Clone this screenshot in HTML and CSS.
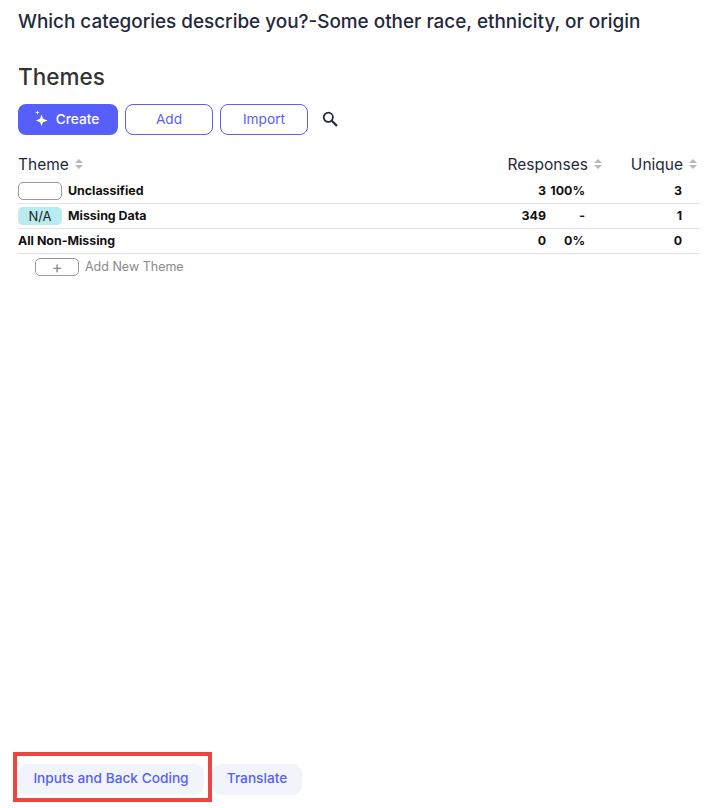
FILE: index.html
```html
<!DOCTYPE html>
<html lang="en">
<head>
    <meta charset="UTF-8">
    <title>Themes</title>
    <link rel="stylesheet" href="styles.css">
</head>
<body>
    <div class="container">
        <h2 class="question">Which categories describe you?-Some other race, ethnicity, or origin</h2>
        <h3 class="section-title">Themes</h3>
        <div class="button-group">
            <button class="btn btn-primary">
                <svg class="sparkle" width="15" height="16" viewBox="0 0 15 16" fill="#fff">
                    <path d="M6.5 4.5 L8 8.8 L12.6 10.5 L8 12.2 L6.5 16 L5 12.2 L0.9 10.5 L5 8.8 Z"/>
                    <path d="M2.4 0.2 L3.1 1.9 L4.7 2.5 L3.1 3.1 L2.4 4.8 L1.7 3.1 L0.1 2.5 L1.7 1.9 Z"/>
                </svg>
                Create
            </button>
            <button class="btn btn-outline">Add</button>
            <button class="btn btn-outline">Import</button>
            <svg class="search-icon" width="16" height="16" viewBox="0 0 16 16" fill="none" stroke="#1f2a3c" stroke-width="1.8">
                <circle cx="6.3" cy="6.3" r="4.6"/>
                <path d="M9.8 9.8 L15 15" stroke-width="2.2"/>
            </svg>
        </div>

        <div class="theme-table">
            <div class="row row-head">
                <div class="head-cell">Theme
                    <svg class="sort" width="8" height="10" viewBox="0 0 8 10"><path d="M4 0 L8 4 H0 Z M0 6 H8 L4 10 Z"/></svg>
                </div>
                <div class="head-cell head-responses">Responses
                    <svg class="sort" width="8" height="10" viewBox="0 0 8 10"><path d="M4 0 L8 4 H0 Z M0 6 H8 L4 10 Z"/></svg>
                </div>
                <div class="head-cell head-unique">Unique
                    <svg class="sort" width="8" height="10" viewBox="0 0 8 10"><path d="M4 0 L8 4 H0 Z M0 6 H8 L4 10 Z"/></svg>
                </div>
            </div>
            <div class="row">
                <div class="name"><span class="tag tag-empty"></span><span class="label">Unclassified</span></div>
                <div class="num">3</div>
                <div class="num">100%</div>
                <div class="num">3</div>
            </div>
            <div class="row">
                <div class="name"><span class="tag tag-na">N/A</span><span class="label">Missing Data</span></div>
                <div class="num">349</div>
                <div class="num">-</div>
                <div class="num">1</div>
            </div>
            <div class="row">
                <div class="name"><span class="label">All Non-Missing</span></div>
                <div class="num">0</div>
                <div class="num">0%</div>
                <div class="num">0</div>
            </div>
            <div class="add-theme">
                <span class="tag tag-add">+</span><span class="label">Add New Theme</span>
            </div>
        </div>

        <div class="footer">
            <div class="highlight">
                <button class="btn-soft btn-inputs">Inputs and Back Coding</button>
            </div>
            <button class="btn-soft btn-translate">Translate</button>
        </div>
    </div>
</body>
</html>
```

FILE: styles.css
```css
* {
    box-sizing: border-box;
}
body {
    margin: 0;
    font-family: Inter, "Noto Sans", sans-serif;
    color: #1f2a3c;
    background: #fff;
}
.container {
    display: flex;
    flex-direction: column;
    height: 808px;
    padding: 10px 14px 0 18px;
}
.question {
    margin: 0;
    font-size: 18.9px;
    line-height: 24px;
    font-weight: 500;
    color: #1f2a3c;
    white-space: nowrap;
}
.section-title {
    margin: 29px 0 0;
    font-size: 22.5px;
    line-height: 28px;
    font-weight: 500;
    color: #333;
}
.button-group {
    display: flex;
    align-items: center;
    gap: 7px;
    margin-top: 13px;
}
.btn {
    height: 31px;
    padding: 0 0 2px;
    border-radius: 8px;
    font-family: inherit;
    font-size: 13.7px;
    color: #565ffa;
    cursor: pointer;
}
.btn-primary {
    display: flex;
    align-items: center;
    justify-content: center;
    gap: 6px;
    width: 100px;
    border: none;
    background-color: #565ffa;
    color: #fff;
    font-weight: 500;
}
.btn-outline {
    width: 88px;
    border: 1px solid #565ffa;
    background: #fff;
}
.sparkle {
    margin: -1px 0 0 -2px;
}
.search-icon {
    margin: -1px 0 0 7px;
}
.theme-table {
    margin-top: 14px;
}
.row {
    display: grid;
    grid-template-columns: 1fr 40px 39px 97px 18px;
    align-items: center;
    height: 25px;
    border-bottom: 1px solid #e3e3e3;
    font-size: 12.4px;
    font-weight: 700;
    color: #111;
}
.row-head {
    display: flex;
    height: 30px;
    border: none;
    font-size: 15.5px;
    font-weight: 400;
    color: #1f2a3c;
}
.head-cell {
    display: flex;
    align-items: center;
    gap: 6px;
    white-space: nowrap;
}
.head-responses {
    margin-left: auto;
}
.head-unique {
    margin: 0 3px 0 29px;
}
.sort {
    fill: #b4b8bf;
}
.name {
    display: flex;
    align-items: center;
    gap: 6px;
}
.label {
    margin-bottom: 2px;
}
.num {
    margin-bottom: 2px;
    text-align: right;
}
.row .num:last-child {
    grid-column: 4;
}
.tag {
    display: inline-flex;
    align-items: center;
    justify-content: center;
    width: 44px;
    height: 18px;
    border-radius: 5px;
    font-size: 13px;
    font-weight: 400;
}
.tag-empty {
    border: 1px solid #999;
}
.tag-na {
    background: #b8ecf0;
    color: #222;
}
.add-theme {
    display: flex;
    align-items: center;
    gap: 6px;
    height: 26px;
    padding-left: 17px;
    font-size: 12.5px;
    color: #8a8a8a;
}
.tag-add {
    border: 1px solid #999;
    font-size: 16px;
    color: #888;
}
.footer {
    display: flex;
    align-items: flex-end;
    margin: auto 0 0 -5px;
    padding-bottom: 6px;
}
.highlight {
    padding: 8px 4px 3px 1px;
    border: 4px solid #ef4444;
    line-height: 0;
}
.btn-soft {
    height: 31px;
    padding: 0 0 3px;
    border: none;
    border-radius: 9px;
    background: #f1f4fb;
    color: #565ffa;
    font-family: inherit;
    font-size: 13.7px;
    font-weight: 500;
    cursor: pointer;
}
.btn-inputs {
    width: 186px;
}
.btn-translate {
    width: 90px;
    margin-bottom: 7px;
}
```
